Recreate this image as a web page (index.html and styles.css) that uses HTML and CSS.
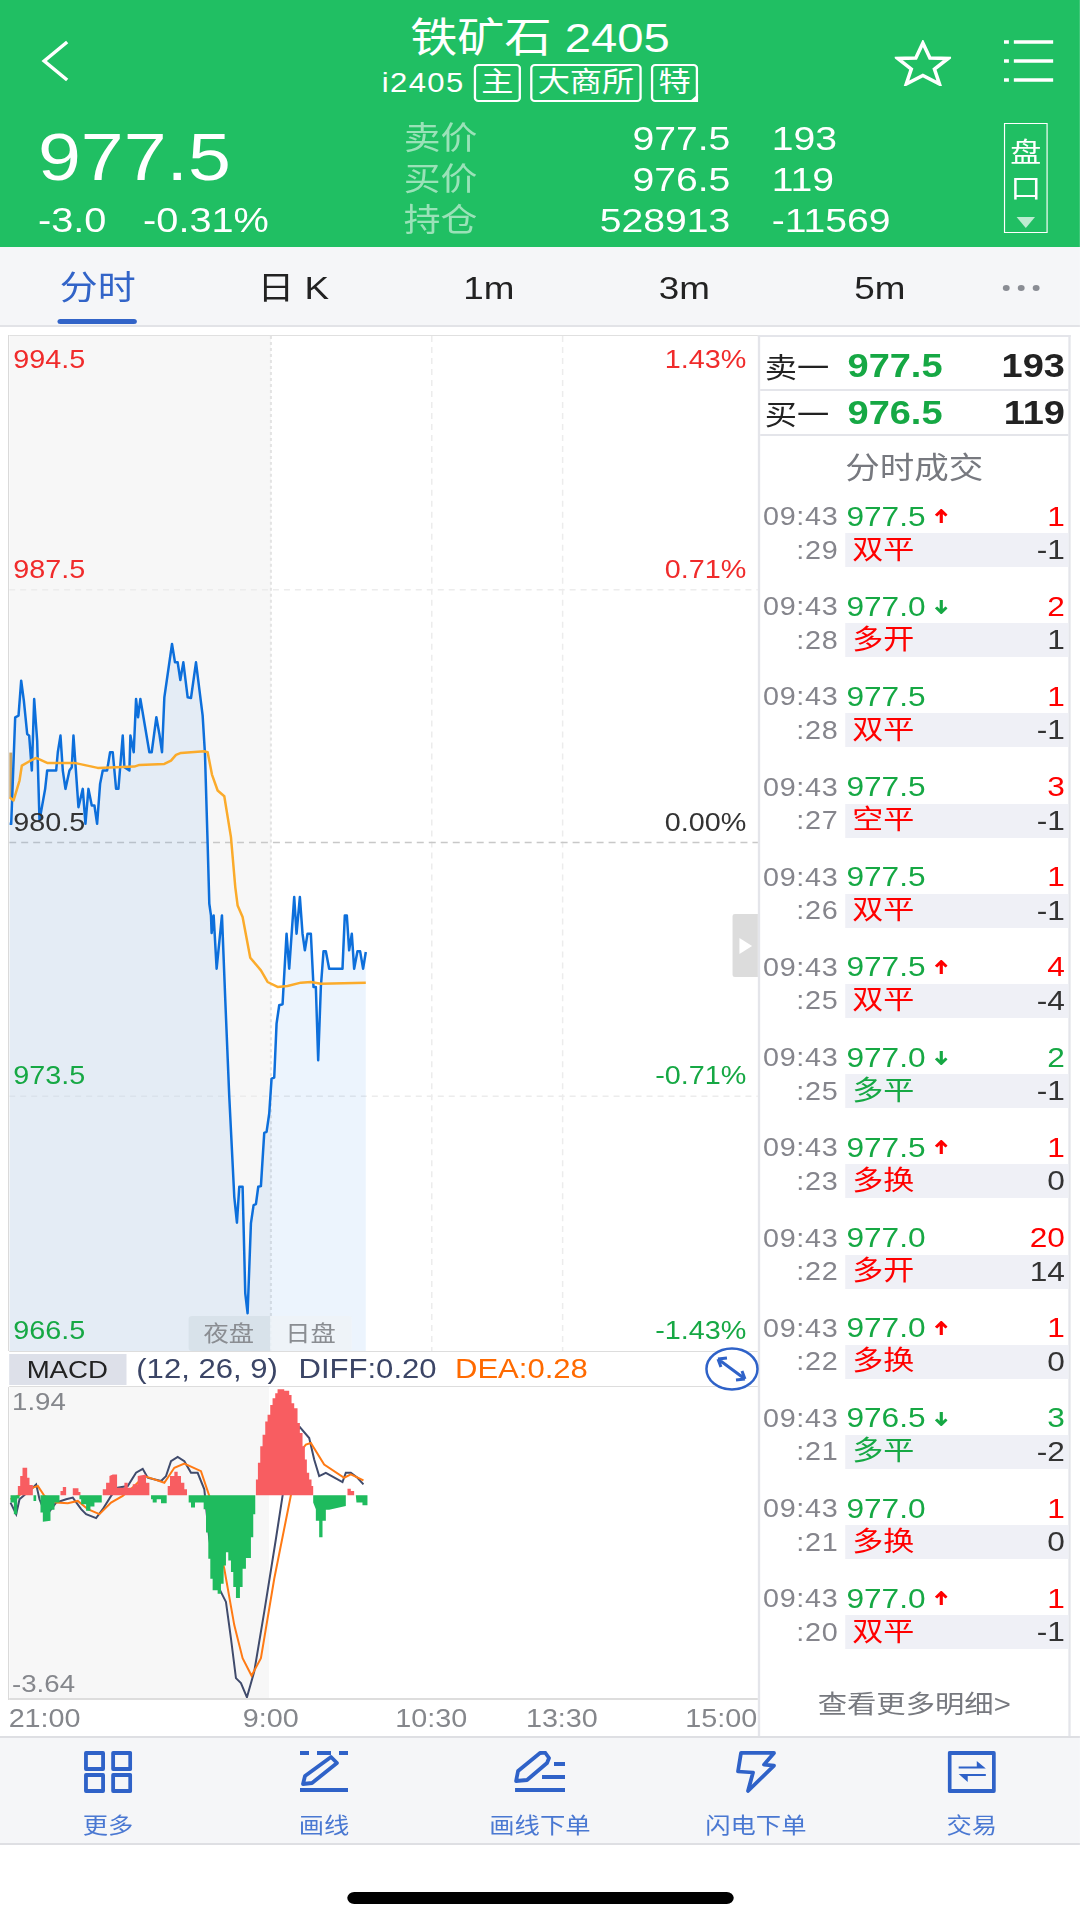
FILE: index.html
```html
<!DOCTYPE html>
<html lang="zh-CN">
  <head>
    <meta charset="UTF-8" />
    <title>铁矿石 2405</title>
    <link rel="stylesheet" href="styles.css">
  </head>
  <body>
    <div class="screen">
      <header class="header">
        <div class="top-row">
          <div class="top-left">
            <svg class="back-icon" viewBox="0 0 30 42" preserveAspectRatio="none"><path d="M27 2 L4 21 L27 40" /></svg>
          </div>
          <div class="title-block">
            <div class="title">铁矿石 2405</div>
            <div class="sub-title">
              <span class="code">i2405</span>
              <span class="tag">主</span>
              <span class="tag">大商所</span>
              <span class="tag tag-special">特</span>
            </div>
          </div>
          <div class="top-right">
            <svg class="star-icon" viewBox="0 0 56 46" preserveAspectRatio="none"><path d="M28 3 L35 18 L53 18.500 L39.500 29 L44.500 44 L28 35.500 L11.500 44 L16.500 29 L3 18.500 L21 18 Z" /></svg>
            <svg class="menu-icon" viewBox="0 0 50 42" preserveAspectRatio="none"><path d="M0 2 H5 M10 2 H50 M0 21 H5 M10 21 H50 M0 40 H5 M10 40 H50" /></svg>
          </div>
        </div>
        <div class="quote-row">
          <div class="price-col">
            <div class="last-price">977.5</div>
            <div class="change"><span>-3.0</span><span>-0.31%</span></div>
          </div>
          <div class="quote-table">
            <span class="q-label">卖价</span><span class="q-val">977.5</span><span class="q-num">193</span>
            <span class="q-label">买价</span><span class="q-val">976.5</span><span class="q-num">119</span>
            <span class="q-label">持仓</span><span class="q-val">528913</span><span class="q-num">-11569</span>
          </div>
          <div class="pankou">
            <span>盘</span>
            <span>口</span>
            <i class="pankou-arrow"></i>
          </div>
        </div>
      </header>

      <nav class="tabs">
        <div class="tab active">分时</div>
        <div class="tab">日 K</div>
        <div class="tab">1m</div>
        <div class="tab">3m</div>
        <div class="tab">5m</div>
        <div class="tab tab-more"><i></i><i></i><i></i></div>
      </nav>

      <main class="content">
        <section class="left-col">
          <div class="main-chart">
            <svg class="chart-svg" viewBox="8 335 750 1016" preserveAspectRatio="none">
              <rect class="night-bg" x="8" y="335" width="262" height="1016" />
              <path class="grid-faint" d="M8 589 H758 M8 1096 H758 M431 335 V1351 M562 335 V1351" />
              <path class="grid-dot" d="M270 335 V1351" />
              <path class="grid-mid" d="M8 842 H758" />
              <rect class="open-bar" x="8" y="752" width="3" height="45" />
              <g transform="translate(0 620) scale(0.3333)">
                <polygon class="price-area" points="25,2193 25,610 30,610 42,290 52,285 60,180 68,240 78,340 84,345 92,450 99,235 108,360 115,600 132,505 138,450 165,450 170,395 178,345 185,450 193,505 205,450 212,440 217,345 232,560 245,505 253,610 262,505 272,555 280,555 288,610 297,490 305,450 318,450 327,395 335,395 345,505 352,505 365,345 370,440 385,450 388,345 398,395 405,235 411,290 418,235 445,395 452,395 466,290 475,340 483,395 490,230 513,70 522,125 530,125 538,178 547,125 560,230 570,232 585,125 605,285 612,400 620,670 625,850 630,885 632,938 638,885 647,1045 663,885 673,1140 685,1430 700,1730 708,1808 715,1700 725,1700 733,2020 740,2080 750,1810 758,1755 765,1752 772,1700 780,1698 790,1538 797,1535 805,1480 812,1375 820,1372 827,1210 835,1155 845,1152 857,940 865,1045 880,830 887,940 897,830 905,940 912,990 920,940 930,940 938,1100 945,1100 952,1320 960,1100 968,993 975,993 985,1045 1025,1045 1032,885 1038,885 1045,990 1053,940 1060,1045 1070,993 1078,993 1087,1045 1095,995 1095,2193" />
                <polyline class="price-line" points="25,610 30,610 42,290 52,285 60,180 68,240 78,340 84,345 92,450 99,235 108,360 115,600 132,505 138,450 165,450 170,395 178,345 185,450 193,505 205,450 212,440 217,345 232,560 245,505 253,610 262,505 272,555 280,555 288,610 297,490 305,450 318,450 327,395 335,395 345,505 352,505 365,345 370,440 385,450 388,345 398,395 405,235 411,290 418,235 445,395 452,395 466,290 475,340 483,395 490,230 513,70 522,125 530,125 538,178 547,125 560,230 570,232 585,125 605,285 612,400 620,670 625,850 630,885 632,938 638,885 647,1045 663,885 673,1140 685,1430 700,1730 708,1808 715,1700 725,1700 733,2020 740,2080 750,1810 758,1755 765,1752 772,1700 780,1698 790,1538 797,1535 805,1480 812,1375 820,1372 827,1210 835,1155 845,1152 857,940 865,1045 880,830 887,940 897,830 905,940 912,990 920,940 930,940 938,1100 945,1100 952,1320 960,1100 968,993 975,993 985,1045 1025,1045 1032,885 1038,885 1045,990 1053,940 1060,1045 1070,993 1078,993 1087,1045 1095,995" />
                <polyline class="avg-line" points="25,530 37,540 55,480 62,435 85,422 105,412 138,427 220,427 290,442 400,438 415,433 490,430 510,420 525,403 540,397 610,392 620,395 633,462 650,510 670,527 690,650 703,800 710,855 725,890 748,1012 780,1050 800,1085 830,1100 860,1097 900,1087 930,1085 960,1090 1095,1087" />
              </g>
            </svg>
            <div class="axis">
              <div class="axis-row up"><span>994.5</span><span>1.43%</span></div>
              <div class="axis-row up"><span>987.5</span><span>0.71%</span></div>
              <div class="axis-row flat"><span>980.5</span><span>0.00%</span></div>
              <div class="axis-row down"><span>973.5</span><span>-0.71%</span></div>
              <div class="axis-row down"><span>966.5</span><span>-1.43%</span></div>
            </div>
            <div class="session">
              <span class="session-night">夜盘</span>
              <span class="session-day">日盘</span>
            </div>
            <div class="collapse-handle"><i></i></div>
          </div>

          <div class="macd-bar">
            <span class="macd-name">MACD</span>
            <span class="macd-param">(12, 26, 9)</span>
            <span class="macd-diff">DIFF:0.20</span>
            <span class="macd-dea">DEA:0.28</span>
            <svg class="expand-icon" viewBox="0 0 54 44" preserveAspectRatio="none">
              <ellipse cx="27" cy="22" rx="25.500" ry="20.500" />
              <path d="M13 12 L40 32 M13 12 L22 11 M13 12 L16 20 M40 32 L31 33 M40 32 L37 24" />
            </svg>
          </div>

          <div class="macd-chart">
            <svg class="chart-svg" viewBox="8 1387 750 313" preserveAspectRatio="none">
              <rect class="night-bg" x="8" y="1387" width="260" height="313" />
              <g transform="translate(0 1340) scale(0.3333)">
                <polyline class="dif-line" points="28,490 45,525 55,480 95,445 105,435 115,480 135,530 165,490 195,480 215,475 240,510 255,525 285,537 305,510 330,470 350,445 380,440 405,400 425,388 440,415 480,425 495,410 510,365 530,352 550,365 570,400 590,400 610,450 625,600 650,740 675,790 690,900 705,1020 720,1035 738,1078 760,1000 790,820 825,600 845,470 870,300 897,262 925,295 940,360 955,410 975,400 1025,428 1035,400 1050,400 1070,415 1088,435" />
                <polyline class="dea-line" points="28,480 50,470 95,445 110,440 130,470 165,490 200,492 230,485 260,510 295,525 330,490 365,470 400,440 430,410 460,420 490,430 520,385 550,372 600,395 625,470 650,600 670,690 700,860 725,960 752,1013 780,960 820,720 870,468 895,340 915,315 930,310 970,375 1030,415 1050,405 1088,423" />
                <g class="bar-up">
                  <polygon points="50,468 50,440 57,440 57,410 64,410 64,385 78,385 78,415 85,415 85,437 95,437 95,468" />
                  <polygon points="178,468 178,455 185,455 185,443 195,443 195,468" />
                  <polygon points="215,468 215,447 232,447 232,458 238,458 238,468" />
                  <polygon points="305,468 305,450 315,450 315,430 325,430 325,410 335,405 348,405 348,445 370,445 370,430 380,430 380,445 395,445 395,435 410,435 410,410 435,405 435,430 445,430 445,468" />
                  <polygon points="500,468 500,440 507,440 507,410 520,410 520,397 530,397 530,410 540,410 540,430 550,430 550,450 558,450 558,468" />
                  <polygon points="765,468 765,420 771,420 771,370 778,370 778,320 785,320 785,285 793,285 793,245 800,245 800,225 808,225 808,195 815,195 815,175 823,175 823,160 830,160 830,148 850,148 850,152 865,152 865,165 872,165 872,190 880,190 880,205 890,205 890,250 897,250 897,280 905,280 905,320 912,320 912,360 918,360 918,400 925,400 925,420 932,420 932,440 937,440 937,468" />
                  <polygon points="1040,468 1040,448 1050,448 1050,455 1060,455 1060,468" />
                </g>
                <g class="bar-down">
                  <polygon points="28,468 55,468 55,478 48,478 48,525 38,525 38,490 28,490" />
                  <polygon points="97,468 105,468 105,485 97,485" />
                  <polygon points="118,468 175,468 175,490 160,490 160,512 148,512 148,545 125,548 125,520 118,520" />
                  <polygon points="235,468 302,468 302,490 280,490 280,502 268,502 268,515 255,515 255,495 240,495 240,480 235,480" />
                  <polygon points="450,468 497,468 497,492 480,492 480,480 467,480 467,490 455,490 455,480 450,480" />
                  <polygon points="560,468 763,468 763,525 757,525 757,595 750,595 750,657 735,657 735,690 725,690 725,745 717,745 717,778 705,778 705,745 697,745 697,700 690,700 690,665 682,665 682,640 675,640 675,680 668,680 668,735 660,735 660,765 650,765 650,755 635,755 635,720 628,720 628,660 622,660 622,580 615,580 615,510 608,510 608,490 582,490 582,505 570,505 570,490 563,490 563,468" />
                  <polygon points="937,468 1035,468 1035,500 985,512 975,512 975,545 965,545 965,595 955,595 955,545 945,545 945,510 937,490" />
                  <polygon points="1065,468 1100,468 1100,498 1085,498 1085,490 1067,490" />
                </g>
              </g>
            </svg>
            <span class="macd-max">1.94</span>
            <span class="macd-min">-3.64</span>
          </div>

          <div class="time-axis">
            <span>21:00</span>
            <span>9:00</span>
            <span>10:30</span>
            <span>13:30</span>
            <span>15:00</span>
          </div>
        </section>

        <aside class="side-panel">
          <div class="book-row first"><span class="book-label">卖一</span><span class="book-price">977.5</span><span class="book-qty">193</span></div>
          <div class="book-row"><span class="book-label">买一</span><span class="book-price">976.5</span><span class="book-qty">119</span></div>
          <div class="trades-title">分时成交</div>
          <div class="trades">
            <div class="trade"><span class="t-time">09:43</span><div class="t-top"><span class="t-price">977.5<svg class="arrow a-up" viewBox="0 0 12 16"><path d="M6 15 V2 M1 7 L6 1.500 L11 7" /></svg></span><span class="t-qty red">1</span></div><span class="t-sec">:29</span><div class="t-bottom"><span class="t-kind red">双平</span><span class="t-delta">-1</span></div></div>
            <div class="trade"><span class="t-time">09:43</span><div class="t-top"><span class="t-price">977.0<svg class="arrow a-down" viewBox="0 0 12 16"><path d="M6 1 V14 M1 9 L6 14.500 L11 9" /></svg></span><span class="t-qty red">2</span></div><span class="t-sec">:28</span><div class="t-bottom"><span class="t-kind red">多开</span><span class="t-delta">1</span></div></div>
            <div class="trade"><span class="t-time">09:43</span><div class="t-top"><span class="t-price">977.5</span><span class="t-qty red">1</span></div><span class="t-sec">:28</span><div class="t-bottom"><span class="t-kind red">双平</span><span class="t-delta">-1</span></div></div>
            <div class="trade"><span class="t-time">09:43</span><div class="t-top"><span class="t-price">977.5</span><span class="t-qty red">3</span></div><span class="t-sec">:27</span><div class="t-bottom"><span class="t-kind red">空平</span><span class="t-delta">-1</span></div></div>
            <div class="trade"><span class="t-time">09:43</span><div class="t-top"><span class="t-price">977.5</span><span class="t-qty red">1</span></div><span class="t-sec">:26</span><div class="t-bottom"><span class="t-kind red">双平</span><span class="t-delta">-1</span></div></div>
            <div class="trade"><span class="t-time">09:43</span><div class="t-top"><span class="t-price">977.5<svg class="arrow a-up" viewBox="0 0 12 16"><path d="M6 15 V2 M1 7 L6 1.500 L11 7" /></svg></span><span class="t-qty red">4</span></div><span class="t-sec">:25</span><div class="t-bottom"><span class="t-kind red">双平</span><span class="t-delta">-4</span></div></div>
            <div class="trade"><span class="t-time">09:43</span><div class="t-top"><span class="t-price">977.0<svg class="arrow a-down" viewBox="0 0 12 16"><path d="M6 1 V14 M1 9 L6 14.500 L11 9" /></svg></span><span class="t-qty green">2</span></div><span class="t-sec">:25</span><div class="t-bottom"><span class="t-kind green">多平</span><span class="t-delta">-1</span></div></div>
            <div class="trade"><span class="t-time">09:43</span><div class="t-top"><span class="t-price">977.5<svg class="arrow a-up" viewBox="0 0 12 16"><path d="M6 15 V2 M1 7 L6 1.500 L11 7" /></svg></span><span class="t-qty red">1</span></div><span class="t-sec">:23</span><div class="t-bottom"><span class="t-kind red">多换</span><span class="t-delta">0</span></div></div>
            <div class="trade"><span class="t-time">09:43</span><div class="t-top"><span class="t-price">977.0</span><span class="t-qty red">20</span></div><span class="t-sec">:22</span><div class="t-bottom"><span class="t-kind red">多开</span><span class="t-delta">14</span></div></div>
            <div class="trade"><span class="t-time">09:43</span><div class="t-top"><span class="t-price">977.0<svg class="arrow a-up" viewBox="0 0 12 16"><path d="M6 15 V2 M1 7 L6 1.500 L11 7" /></svg></span><span class="t-qty red">1</span></div><span class="t-sec">:22</span><div class="t-bottom"><span class="t-kind red">多换</span><span class="t-delta">0</span></div></div>
            <div class="trade"><span class="t-time">09:43</span><div class="t-top"><span class="t-price">976.5<svg class="arrow a-down" viewBox="0 0 12 16"><path d="M6 1 V14 M1 9 L6 14.500 L11 9" /></svg></span><span class="t-qty green">3</span></div><span class="t-sec">:21</span><div class="t-bottom"><span class="t-kind green">多平</span><span class="t-delta">-2</span></div></div>
            <div class="trade"><span class="t-time">09:43</span><div class="t-top"><span class="t-price">977.0</span><span class="t-qty red">1</span></div><span class="t-sec">:21</span><div class="t-bottom"><span class="t-kind red">多换</span><span class="t-delta">0</span></div></div>
            <div class="trade"><span class="t-time">09:43</span><div class="t-top"><span class="t-price">977.0<svg class="arrow a-up" viewBox="0 0 12 16"><path d="M6 15 V2 M1 7 L6 1.500 L11 7" /></svg></span><span class="t-qty red">1</span></div><span class="t-sec">:20</span><div class="t-bottom"><span class="t-kind red">双平</span><span class="t-delta">-1</span></div></div>
          </div>
          <div class="more-link">查看更多明细&gt;</div>
        </aside>
      </main>

      <footer class="toolbar">
        <div class="tool">
          <svg class="tool-icon icon-grid" viewBox="0 0 48 42" preserveAspectRatio="none"><path d="M2 2 H19 V18 H2 Z M29 2 H46 V18 H29 Z M2 24 H19 V40 H2 Z M29 24 H46 V40 H29 Z" /></svg>
          <span>更多</span>
        </div>
        <div class="tool">
          <svg class="tool-icon icon-draw" viewBox="0 0 50 42" preserveAspectRatio="none"><path d="M1 2 H10 M18 2 H32 M40 2 H49 M4 33 L6 25 L32 6 L38 12 L13 32 Z M1 39 H49" /></svg>
          <span>画线</span>
        </div>
        <div class="tool">
          <svg class="tool-icon icon-order" viewBox="0 0 52 42" preserveAspectRatio="none"><path d="M2 30 L4 20 L26 2 L31 1.500 L35 7 L33 12 L13 29 Z M40 13 H51 M28 26 H51 M1 39 H51" /></svg>
          <span>画线下单</span>
        </div>
        <div class="tool">
          <svg class="tool-icon icon-flash" viewBox="0 0 40 43" preserveAspectRatio="none"><path d="M5 2 H38 L28 14 L38 15 L12 41 L17 22 L2 21 Z" /></svg>
          <span>闪电下单</span>
        </div>
        <div class="tool">
          <svg class="tool-icon icon-trade" viewBox="0 0 48 42" preserveAspectRatio="none"><path d="M2 2 H46 V40 H2 Z" /><path class="trade-arrows" d="M11 15.500 H29 V10 L38 17.500 H11 Z M38 23 V25 H20 V31 L11 23 Z" /></svg>
          <span>交易</span>
        </div>
      </footer>

      <div class="home-wrap"><div class="home-bar"></div></div>
    </div>
  </body>
</html>
```

FILE: styles.css
```css
html,
body {
  margin: 0;
  width: 1080px;
  height: 1920px;
  overflow: hidden;
  background: #fff;
}
/* the capture is wider than the phone it came from, so everything is stretched 1.15x */
.screen {
  width: 939px;
  height: 1920px;
  transform: scaleX(1.15);
  transform-origin: 0 0;
  font-family: "Liberation Sans", "Noto Sans CJK SC", sans-serif;
  display: flex;
  flex-direction: column;
  color: #222;
}
.header {
  height: 247px;
  background: #20bf63;
  color: #fff;
  flex: none;
}
.top-row {
  display: grid;
  grid-template-columns: 1fr auto 1fr;
  height: 104px;
}
.top-left {
  padding: 40px 0 0 35px;
}
.back-icon {
  width: 26px;
  height: 42px;
  display: block;
}
.back-icon path,
.star-icon path,
.menu-icon path {
  fill: none;
  stroke: #fff;
  stroke-width: 3.500;
}
.title-block {
  padding-top: 16px;
  text-align: center;
}
.title {
  font-size: 41px;
  line-height: 44px;
}
.sub-title {
  margin-top: 4px;
  display: flex;
  justify-content: center;
  align-items: center;
  gap: 8px;
  height: 38px;
}
.code {
  font-size: 27px;
  letter-spacing: 1.200px;
}
.tag {
  position: relative;
  font-size: 28px;
  line-height: 34px;
  padding: 0 4.500px;
  border: 2px solid #fff;
  border-radius: 4px;
}
.tag-special::after {
  content: "";
  position: absolute;
  right: -2px;
  bottom: -2px;
  border-left: 8px solid transparent;
  border-bottom: 8px solid #fff;
}
.top-right {
  display: flex;
  justify-content: flex-end;
  align-items: flex-start;
  padding: 40px 23px 0 0;
  gap: 46px;
}
.star-icon {
  width: 49px;
  height: 46px;
}
.menu-icon {
  width: 43px;
  height: 42px;
}
.quote-row {
  display: flex;
  margin-top: 14px;
}
.price-col {
  width: 351px;
  padding-left: 33px;
  box-sizing: border-box;
  flex: none;
}
.last-price {
  font-size: 67px;
  line-height: 78px;
}
.change {
  display: flex;
  gap: 32px;
  font-size: 34.500px;
  line-height: 40px;
  margin-top: 4px;
}
.quote-table {
  display: grid;
  grid-template-columns: 70px 214px 238px;
  grid-auto-rows: 41px;
  align-items: center;
  width: 522px;
  font-size: 34px;
  flex: none;
}
.q-label {
  font-size: 32px;
  line-height: 41px;
  margin-top: -1px;
  color: rgba(255, 255, 255, 0.55);
}
.q-val {
  text-align: right;
}
.q-num {
  padding-left: 36px;
}
.pankou {
  width: 38px;
  height: 110px;
  margin-top: 5px;
  border: 1.500px solid #fff;
  box-sizing: border-box;
  display: flex;
  flex-direction: column;
  align-items: center;
  font-size: 27px;
  line-height: 36px;
  padding-top: 11px;
}
.pankou-arrow {
  margin-top: 10px;
  border-left: 8px solid transparent;
  border-right: 8px solid transparent;
  border-top: 11px solid rgba(255, 255, 255, 0.7);
}
.tabs {
  height: 80px;
  flex: none;
  display: flex;
  background: #f5f6f8;
  border-bottom: 2px solid #e2e3e7;
  box-sizing: border-box;
  margin-bottom: 8px;
  font-size: 32px;
  line-height: 40px;
}
.tab {
  width: 170px;
  position: relative;
  display: flex;
  align-items: center;
  justify-content: center;
  padding-top: 3px;
  box-sizing: border-box;
}
.tab.active {
  color: #3264c8;
  font-size: 33px;
}
.tab.active::after {
  content: "";
  position: absolute;
  left: 50px;
  width: 69px;
  bottom: 1px;
  height: 5px;
  border-radius: 3px;
  background: #3264c8;
}
.tab-more {
  width: 76px;
  gap: 7px;
}
.tab-more i {
  width: 6px;
  height: 6px;
  border-radius: 50%;
  background: #8a8d94;
}
.content {
  display: flex;
  height: 1401px;
  flex: none;
  padding-left: 7.500px;
}
.left-col {
  width: 651.500px;
  flex: none;
  display: flex;
  flex-direction: column;
}
.chart-svg {
  position: absolute;
  left: 0;
  top: 0;
  width: 100%;
  height: 100%;
}
.main-chart {
  position: relative;
  height: 1016px;
  flex: none;
  border-top: 1px solid #e0e0e0;
  box-sizing: border-box;
  box-shadow: -1px 0 0 #d9d9d9;
}
.night-bg {
  fill: #f7f7f7;
}
.grid-faint {
  fill: none;
  stroke: #ececec;
  stroke-width: 1.500;
  stroke-dasharray: 6 5;
}
.grid-dot {
  fill: none;
  stroke: #e3e3e3;
  stroke-width: 2;
  stroke-dasharray: 3 3;
}
.grid-mid {
  fill: none;
  stroke: #c8c8c8;
  stroke-width: 1.500;
  stroke-dasharray: 7 5;
}
.open-bar {
  fill: #c8a468;
}
.price-area {
  fill: rgba(10, 120, 230, 0.08);
}
.price-line {
  fill: none;
  stroke: #0d6fdb;
  stroke-width: 7.500;
  stroke-linejoin: round;
}
.avg-line {
  fill: none;
  stroke: #fbab2b;
  stroke-width: 7.500;
  stroke-linejoin: round;
}
.axis {
  position: absolute;
  left: 0;
  right: 0;
  top: 0;
  padding: 8px 10px 0 4px;
  font-size: 25px;
  line-height: 30px;
}
.axis-row {
  display: flex;
  justify-content: space-between;
  margin-top: 223px;
}
.axis-row:first-child {
  margin-top: 0;
}
.axis-row:nth-child(2) {
  margin-top: 180px;
}
.axis-row:last-child {
  margin-top: 225px;
}
.up {
  color: #f02b2b;
}
.flat {
  color: #333;
}
.down {
  color: #16a844;
}
.session {
  position: absolute;
  left: 156px;
  bottom: 0;
  height: 35px;
  display: flex;
  font-size: 22px;
  line-height: 35px;
  color: #8a8d92;
  text-align: center;
}
.session-night {
  width: 71px;
  background: #d8e2ea;
  border-radius: 3px 0 0 3px;
}
.session-day {
  width: 71px;
  background: rgba(238, 244, 248, 0.9);
  border-radius: 0 3px 3px 0;
}
.collapse-handle {
  position: absolute;
  right: 0;
  top: 578px;
  width: 22px;
  height: 63px;
  background: #dcdcdc;
  border-radius: 2px 0 0 2px;
  display: flex;
  align-items: center;
  justify-content: center;
}
.collapse-handle i {
  border-top: 8px solid transparent;
  border-bottom: 8px solid transparent;
  border-left: 11px solid #fff;
}
.macd-bar {
  position: relative;
  height: 36px;
  flex: none;
  display: flex;
  align-items: center;
  font-size: 27px;
  color: #3b4566;
  border-top: 1px solid #ddd;
  border-bottom: 1px solid #ddd;
  box-sizing: border-box;
}
.macd-name {
  width: 102px;
  height: 31px;
  line-height: 31px;
  background: #dde0e9;
  color: #222;
  text-align: center;
  font-size: 24px;
}
.macd-param {
  margin-left: 9px;
}
.macd-diff {
  margin-left: 18px;
}
.macd-dea {
  margin-left: 16px;
  color: #ff6a00;
}
.expand-icon {
  position: absolute;
  right: -1px;
  top: -5px;
  width: 47px;
  height: 44px;
}
.expand-icon ellipse,
.expand-icon path {
  fill: #fff;
  stroke: #2f62c8;
  stroke-width: 2.500;
}
.expand-icon path {
  fill: none;
  stroke-width: 3;
}
.macd-chart {
  position: relative;
  height: 313px;
  flex: none;
  border-bottom: 2px solid #ddd;
  box-sizing: border-box;
  box-shadow: -1px 0 0 #d9d9d9;
}
.dif-line {
  fill: none;
  stroke: #404b6c;
  stroke-width: 6;
}
.dea-line {
  fill: none;
  stroke: #ff7a14;
  stroke-width: 6;
}
.bar-up polygon {
  fill: #f85d61;
}
.bar-down polygon {
  fill: #1fbb5e;
}
.macd-max,
.macd-min {
  position: absolute;
  left: 3px;
  font-size: 24px;
  line-height: 28px;
  color: #85878c;
}
.macd-max {
  top: 1px;
}
.macd-min {
  bottom: 0;
}
.time-axis {
  height: 36px;
  flex: none;
  display: flex;
  align-items: center;
  font-size: 25px;
  color: #85878c;
}
.time-axis span:nth-child(2) {
  margin-left: 141px;
}
.time-axis span:nth-child(3) {
  margin-left: 84px;
}
.time-axis span:nth-child(4) {
  margin-left: 51px;
}
.time-axis span:nth-child(5) {
  margin-left: 76px;
}
.side-panel {
  width: 272px;
  flex: none;
  box-sizing: border-box;
  border-left: 2px solid #e4e5ea;
  border-right: 2px solid #e4e5ea;
  border-top: 2px solid #e4e5ea;
  display: flex;
  flex-direction: column;
}
.book-row {
  height: 45px;
  display: flex;
  align-items: center;
  padding: 0 3px 0 4px;
  border-bottom: 2px solid #e4e5ea;
  box-sizing: border-box;
  font-size: 33px;
  font-weight: bold;
  flex: none;
}
.book-row.first {
  height: 54px;
  padding-top: 6px;
}
.book-label {
  width: 72px;
  font-size: 28px;
  font-weight: normal;
}
.book-price {
  color: #16a844;
  flex: 1;
}
.trades-title {
  height: 64px;
  flex: none;
  line-height: 64px;
  text-align: center;
  font-size: 30px;
  color: #77797f;
}
.trade {
  display: grid;
  grid-template-columns: 68px 1fr;
  column-gap: 6px;
  grid-template-rows: 33px 34px;
  margin-bottom: 23.200px;
  align-items: center;
}
.t-time,
.t-sec {
  text-align: right;
  font-size: 25px;
  letter-spacing: 0.600px;
  color: #85858c;
}
.t-top,
.t-bottom {
  display: flex;
  justify-content: space-between;
  align-items: center;
  padding: 0 3px 0 1px;
  font-size: 27.500px;
  height: 100%;
}
.t-bottom {
  background: #eff0f6;
  padding-left: 6px;
}
.t-price {
  color: #16a844;
  display: flex;
  align-items: center;
}
.arrow {
  width: 11px;
  height: 15px;
  margin-left: 8px;
  fill: none;
  stroke-width: 3;
}
.a-up {
  stroke: #f00;
}
.a-down {
  stroke: #16a844;
}
.red {
  color: #f00;
}
.green {
  color: #16a844;
}
.t-kind {
  font-size: 27px;
  line-height: 30px;
  margin-top: -1px;
}
.t-delta {
  color: #333;
}
.more-link {
  margin-top: auto;
  height: 66px;
  flex: none;
  text-align: center;
  line-height: 64px;
  font-size: 25.500px;
  color: #77797f;
}
.trades {
  flex: none;
}
.toolbar {
  height: 109px;
  flex: none;
  display: flex;
  background: #f5f6f8;
  border-top: 2px solid #dedfe3;
  border-bottom: 2px solid #dedfe3;
  box-sizing: border-box;
}
.tool {
  flex: 1;
  display: flex;
  flex-direction: column;
  align-items: center;
  padding-top: 13px;
  font-size: 22px;
  color: #4a78d2;
}
/* viewBoxes are in real pixels, the widths undo the page stretch */
.tool-icon {
  height: 42px;
  margin-bottom: 14px;
}
.icon-grid {
  width: 42px;
}
.icon-draw {
  width: 43.500px;
}
.icon-order {
  width: 45.200px;
}
.icon-flash {
  width: 34.800px;
}
.icon-trade {
  width: 42px;
}
.tool-icon path {
  fill: none;
  stroke: #2f62c8;
  stroke-width: 3.800;
  stroke-linejoin: round;
}
.tool-icon .trade-arrows {
  fill: #2f62c8;
  stroke: none;
}
.home-wrap {
  flex: 1;
  display: flex;
  justify-content: center;
  padding-top: 47px;
}
.home-bar {
  width: 336px;
  height: 12px;
  background: #000;
  border-radius: 6px;
}
```
